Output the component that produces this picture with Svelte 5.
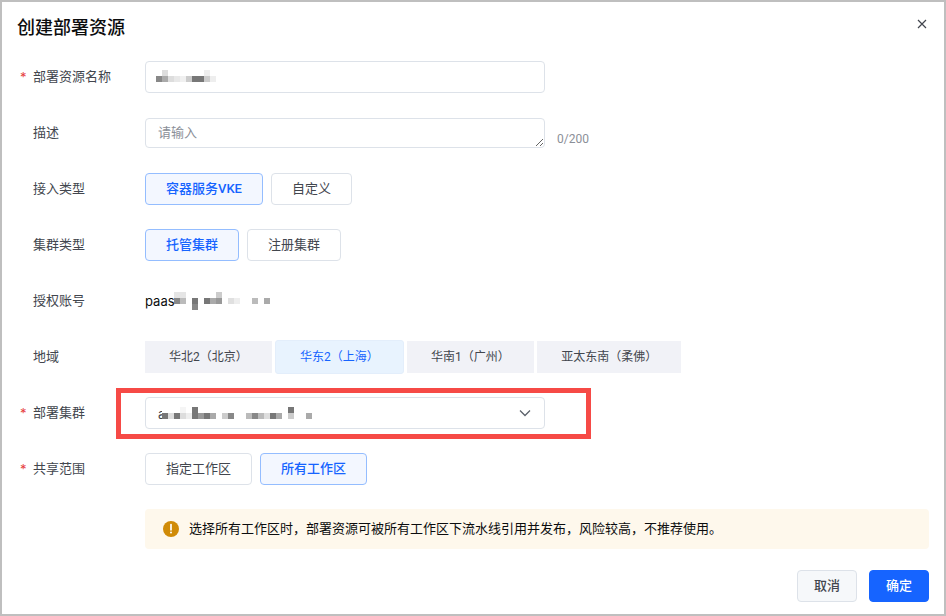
<script>
	// pixelated (redacted) values, each block is [x, y, grey]
	const BLOCK = 6;

	const nameBlur = [
		[1, 0, "#dddddd"], [8, 0, "#eeeeee"],
		[0, 1, "#888888"], [1, 1, "#aaaaaa"], [2, 1, "#dddddd"], [3, 1, "#e8e8e8"], [4, 1, "#f0f0f0"],
		[5, 1, "#cccccc"], [6, 1, "#777777"], [7, 1, "#777777"], [8, 1, "#cccccc"], [9, 1, "#eeeeee"]
	];
	const accountBlur = [
		[0, 0, "#e5e5e5"], [1, 0, "#e5e5e5"], [7, 0, "#cccccc"],
		[0, 1, "#888888"], [1, 1, "#bbbbbb"], [3, 1, "#777777"], [5, 1, "#777777"], [6, 1, "#aaaaaa"],
		[7, 1, "#999999"], [9, 1, "#e0e0e0"], [10, 1, "#eeeeee"], [13, 1, "#bbbbbb"], [15, 1, "#aaaaaa"],
		[3, 2, "#888888"]
	];
	const clusterBlur = [
		[0, 0, "#ffffff"], [3, 0, "#f5f5f5"], [5, 0, "#777777"], [21, 0, "#777777"],
		[0, 1, "#777777"], [1, 1, "#dddddd"], [2, 1, "#777777"], [3, 1, "#dddddd"], [4, 1, "#eeeeee"],
		[5, 1, "#777777"], [6, 1, "#999999"], [7, 1, "#777777"], [8, 1, "#aaaaaa"], [10, 1, "#cccccc"],
		[11, 1, "#888888"], [14, 1, "#bbbbbb"], [15, 1, "#888888"], [16, 1, "#bbbbbb"], [17, 1, "#dddddd"],
		[18, 1, "#777777"], [19, 1, "#aaaaaa"], [21, 1, "#cccccc"], [24, 1, "#aaaaaa"]
	];

	const regions = ["华北2（北京）", "华东2（上海）", "华南1（广州）", "亚太东南（柔佛）"];
	let region = $state(1);
	let access = $state("容器服务VKE");
	let cluster = $state("托管集群");
	let scope = $state("所有工作区");
</script>

{#snippet blur(blocks, cols, rows)}
	<svg class="blur" width={cols * BLOCK} height={rows * BLOCK} shape-rendering="crispEdges">
		{#each blocks as [x, y, fill]}
			<rect x={x * BLOCK} y={y * BLOCK} width={BLOCK} height={BLOCK} {fill} />
		{/each}
	</svg>
{/snippet}

{#snippet choice(options, current, pick)}
	<div class="choices">
		{#each options as option}
			<button class="choice" class:active={option === current} onclick={() => pick(option)}>{option}</button>
		{/each}
	</div>
{/snippet}

<div class="modal">
	<header>
		<h1>创建部署资源</h1>
		<button class="close" aria-label="关闭">
			<svg width="10" height="10" viewBox="0 0 10 10" fill="none" stroke="#42464e" stroke-width="1.2">
				<path d="M1 1l8 8M9 1l-8 8" />
			</svg>
		</button>
	</header>

	<div class="form">
		<div class="row">
			<span class="star">*</span><span class="label">部署资源名称</span>
			<div class="input name">{@render blur(nameBlur, 10, 2)}</div>
		</div>

		<div class="row">
			<span class="star"></span><span class="label">描述</span>
			<textarea placeholder="请输入"></textarea>
			<span class="count">0/200</span>
		</div>

		<div class="row">
			<span class="star"></span><span class="label">接入类型</span>
			{@render choice(["容器服务VKE", "自定义"], access, (v) => (access = v))}
		</div>

		<div class="row">
			<span class="star"></span><span class="label">集群类型</span>
			{@render choice(["托管集群", "注册集群"], cluster, (v) => (cluster = v))}
		</div>

		<div class="row">
			<span class="star"></span><span class="label">授权账号</span>
			<div class="account"><span class="prefix">paas</span>{@render blur(accountBlur, 16, 3)}</div>
		</div>

		<div class="row">
			<span class="star"></span><span class="label">地域</span>
			<div class="regions">
				{#each regions as name, i}
					<button class="region" class:active={i === region} onclick={() => (region = i)}>{name}</button>
				{/each}
			</div>
		</div>

		<div class="row">
			<span class="star">*</span><span class="label">部署集群</span>
			<div class="input select">
				<span class="clipped">a</span>{@render blur(clusterBlur, 25, 2)}
				<svg class="chevron" width="12" height="8" viewBox="0 0 12 8" fill="none" stroke="#5c626b" stroke-width="1.3">
					<path d="M1 1.5l5 5 5-5" />
				</svg>
			</div>
		</div>

		<div class="row">
			<span class="star">*</span><span class="label">共享范围</span>
			{@render choice(["指定工作区", "所有工作区"], scope, (v) => (scope = v))}
		</div>

		<div class="alert">
			<svg width="16" height="16" viewBox="0 0 16 16">
				<circle cx="8" cy="8" r="8" fill="#d08b07" />
				<path d="M8 3.6v5.2" stroke="#fff" stroke-width="1.7" stroke-linecap="round" />
				<circle cx="8" cy="11.6" r="1" fill="#fff" />
			</svg>
			<span>选择所有工作区时，部署资源可被所有工作区下流水线引用并发布，风险较高，不推荐使用。</span>
		</div>
	</div>

	<footer>
		<button class="btn cancel">取消</button>
		<button class="btn ok">确定</button>
	</footer>

	<div class="highlight"></div>
</div>

<style>
	:global(body) {
		background: #fff;
	}

	.modal {
		position: relative;
		box-sizing: border-box;
		width: 946px;
		height: 616px;
		border: 2px solid #bfbfbf;
		background: #fff;
		font-family: Inter, "Noto Sans CJK SC", sans-serif;
		font-size: 13px;
		color: #42464e;
		overflow: hidden;
	}

	header {
		display: flex;
		justify-content: space-between;
		align-items: center;
		height: 50px;
		padding: 0 17px 0 15px;
	}

	h1 {
		margin: 0 0 2px;
		font-size: 18px;
		font-weight: 500;
		color: #0c0d0e;
	}

	.close {
		display: flex;
		padding: 0;
		border: none;
		background: none;
		margin-top: -6px;
	}

	.form {
		padding: 9px 15px 0 18px;
	}

	.row {
		display: flex;
		align-items: center;
		height: 32px;
		margin-bottom: 24px;
	}

	.star {
		width: 13px;
		color: #e63f3f;
		flex: none;
		padding-bottom: 1px;
	}

	.label {
		width: 112px;
		flex: none;
		padding-bottom: 3px;
	}

	.input {
		box-sizing: border-box;
		display: flex;
		align-items: center;
		width: 400px;
		height: 32px;
		border: 1px solid #dde2e9;
		border-radius: 4px;
	}

	.name {
		padding: 0 0 2px 10px;
	}

	.select {
		padding: 0 13px 0 12px;
		color: #0c0d0e;
	}

	.clipped {
		width: 4px;
		margin-top: 1px;
		color: #42464e;
	}

	.chevron {
		margin-left: auto;
	}

	.blur {
		display: block;
		flex: none;
	}

	textarea {
		box-sizing: border-box;
		display: block;
		width: 400px;
		height: 30px;
		margin: 0;
		padding: 3px 12px;
		border: 1px solid #dde2e9;
		border-radius: 4px;
		font: inherit;
		outline: none;
	}

	textarea::placeholder {
		color: #8b8f98;
	}

	.count {
		margin: 12px 0 0 12px;
		font-family: Roboto, sans-serif;
		font-size: 12px;
		color: #8b8f98;
	}

	.choices {
		display: flex;
		gap: 8px;
	}

	.choice {
		box-sizing: border-box;
		height: 32px;
		padding: 0 20px 3px;
		border: 1px solid #dde2e9;
		border-radius: 4px;
		background: #fff;
		font: inherit;
		font-family: Roboto, "Noto Sans CJK SC", sans-serif;
		color: #42464e;
	}

	.choice.active {
		border-color: #94bdff;
		background: #f3f7ff;
		color: #1664ff;
		font-weight: 500;
	}

	.account {
		display: flex;
		align-items: flex-start;
		color: #0c0d0e;
	}

	.prefix {
		width: 29px;
	}

	.account .blur {
		margin-top: -1px;
	}

	.regions {
		display: flex;
		gap: 3.3px;
	}

	.region {
		box-sizing: border-box;
		height: 32px;
		padding: 0 24px 3px;
		border: none;
		background: #f1f2f7;
		font: inherit;
		font-family: Roboto, "Noto Sans CJK SC", sans-serif;
		font-size: 12px;
		color: #42464e;
	}

	.region.active {
		height: 34px;
		margin: -1px 0;
		border: 1px solid #e3eefb;
		border-radius: 3px;
		background: #e8f3fe;
		color: #1664ff;
	}

	.alert {
		box-sizing: border-box;
		display: flex;
		align-items: center;
		gap: 10px;
		height: 40px;
		margin: 0 0 0 125px;
		padding: 0 0 3px 18px;
		border-radius: 4px;
		background: #fef8ec;
		color: #0c0d0e;
	}

	.alert svg {
		margin-top: 3px;
	}

	footer {
		display: flex;
		justify-content: flex-end;
		gap: 12px;
		padding: 21px 15px 0 0;
	}

	.btn {
		box-sizing: border-box;
		width: 60px;
		height: 32px;
		padding: 0 0 3px;
		border: 1px solid #dde2e9;
		border-radius: 4px;
		background: #f6f8fa;
		font: inherit;
		font-weight: 500;
		color: #42464e;
	}

	.btn.ok {
		border-color: #1664ff;
		background: #1664ff;
		color: #fff;
	}

	.highlight {
		position: absolute;
		left: 114px;
		top: 386px;
		box-sizing: border-box;
		width: 475px;
		height: 51px;
		border: 5px solid #f64a46;
		pointer-events: none;
	}
</style>
